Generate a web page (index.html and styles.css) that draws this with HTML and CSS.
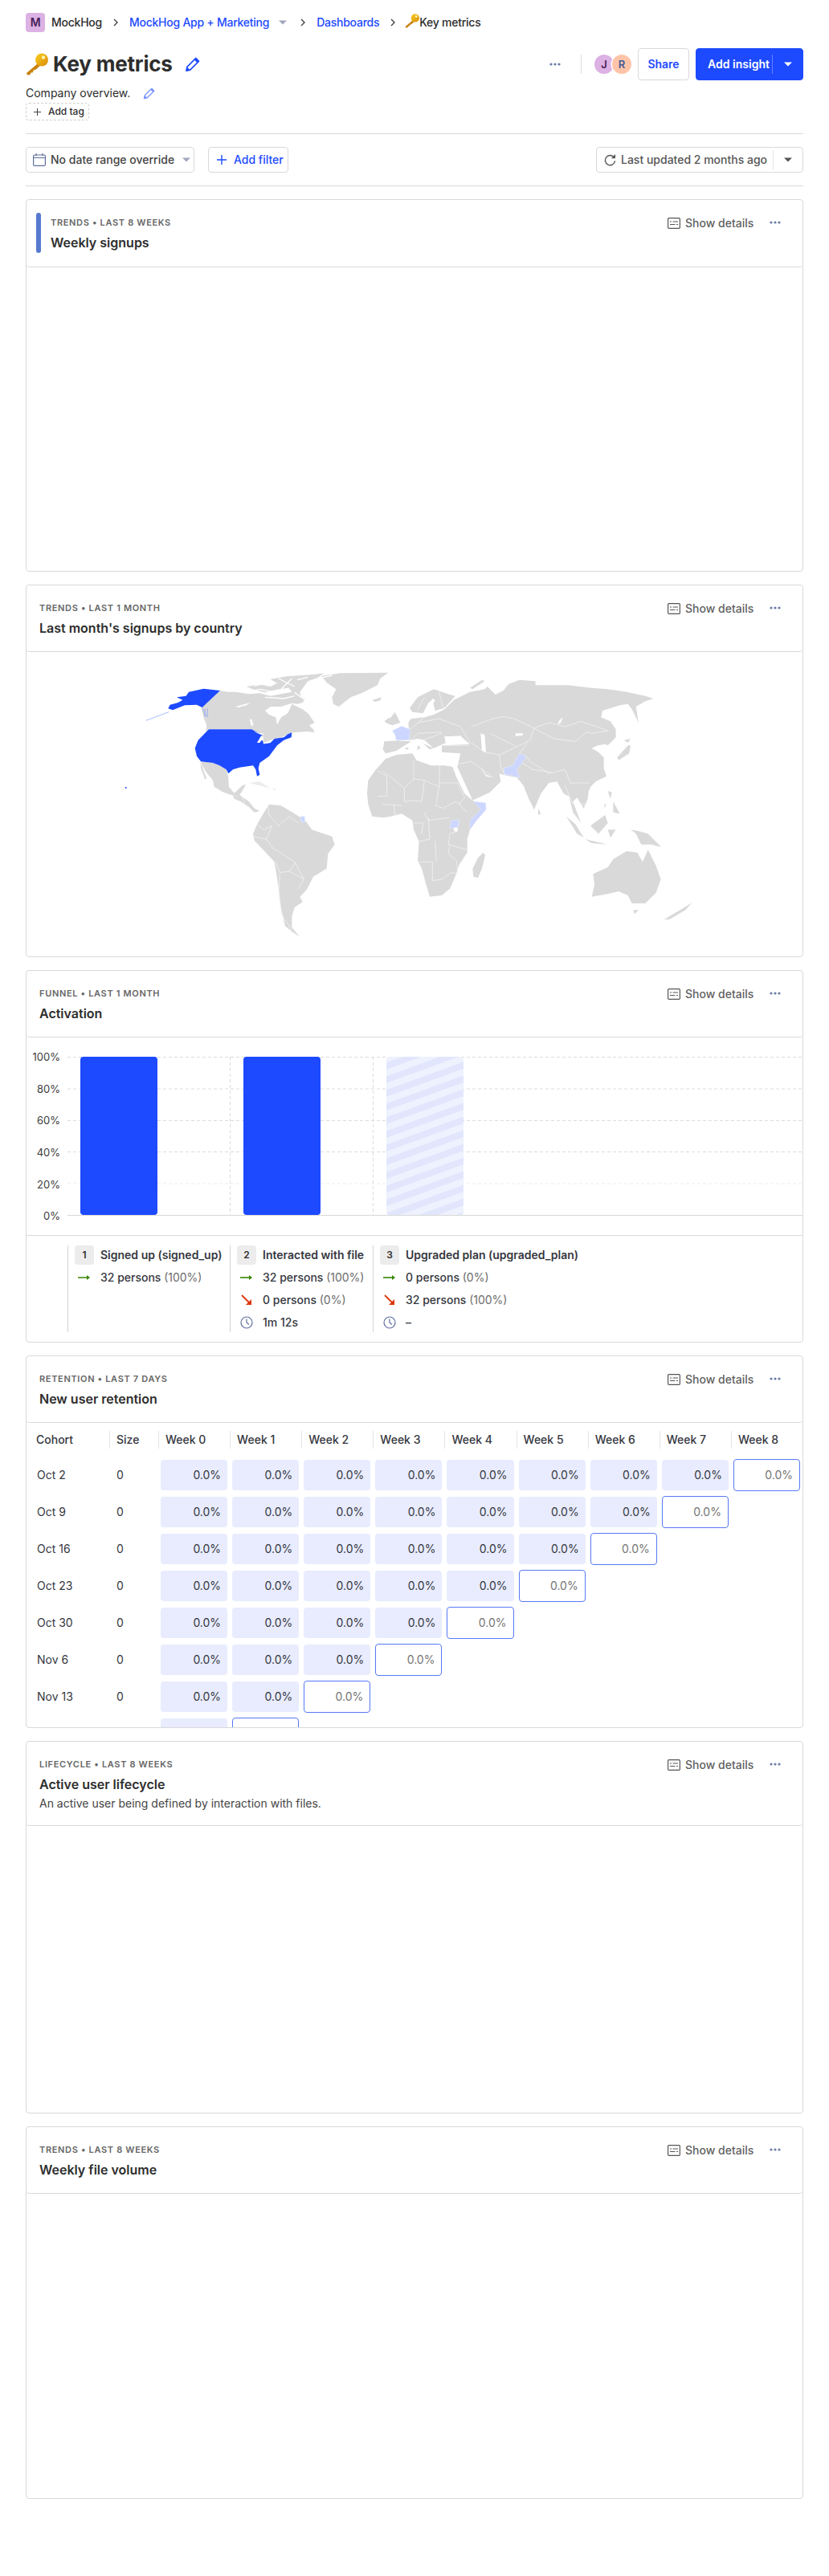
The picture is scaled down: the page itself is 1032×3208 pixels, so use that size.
FILE: index.html
```html
<!DOCTYPE html>
<html lang="en">
<head>
<meta charset="utf-8">
<title>Key metrics</title>
<link rel="stylesheet" href="styles.css">
</head>
<body>
<svg class="defs" width="0" height="0" aria-hidden="true">
  <defs>
    <linearGradient id="gold" x1="0" y1="0" x2="1" y2="1"><stop offset="0" stop-color="#fbd01e"/><stop offset="1" stop-color="#d98a0c"/></linearGradient>
    <pattern id="hatch" patternUnits="userSpaceOnUse" width="16" height="16" patternTransform="rotate(-20)"><rect width="16" height="16" fill="#eef1fe"/><rect width="16" height="8" fill="#e1e6fd"/></pattern>
    <symbol id="i-key" viewBox="0 0 28 28">
      <path d="M15 13 1 25l1 2.500 3.500-.5 1-2.500 2.500-.3.5-2.600 2.500-.5 7-6z" fill="#c9820f"/>
      <circle cx="20" cy="8.500" r="8" fill="url(#gold)"/>
      <circle cx="22" cy="5.500" r="2.200" fill="#fff4b0"/>
    </symbol>
    <symbol id="i-pencil" viewBox="0 0 20 20"><path d="M2 18l1-5L13 3l4 4L7 17zM14.500 1.500l4 4-1 1-4-4z" fill="none" stroke="currentColor" stroke-width="1.700" stroke-linejoin="round"/><path d="M3 13l4 4-5 1z" fill="currentColor"/></symbol>
    <symbol id="i-chev" viewBox="0 0 8 12"><path d="M2 2l4 4-4 4" fill="none" stroke="currentColor" stroke-width="1.400"/></symbol>
    <symbol id="i-caret" viewBox="0 0 10 6"><path d="M0 .5h10L5 5.500z" fill="currentColor"/></symbol>
    <symbol id="i-plus" viewBox="0 0 12 12"><path d="M6 0v12M0 6h12" stroke="currentColor" stroke-width="1.400"/></symbol>
    <symbol id="i-dots" viewBox="0 0 14 4"><circle cx="2" cy="2" r="1.600" fill="currentColor"/><circle cx="7" cy="2" r="1.600" fill="currentColor"/><circle cx="12" cy="2" r="1.600" fill="currentColor"/></symbol>
    <symbol id="i-details" viewBox="0 0 16 14"><rect x=".6" y=".6" width="14.800" height="12.800" rx="1.200" fill="none" stroke="currentColor" stroke-width="1.200"/><path d="M3 5h2M6.500 5h6.500M3 8.500h6.500M11 8.500h2" stroke="currentColor" stroke-width="1.200"/></symbol>
    <symbol id="i-right" viewBox="0 0 16 8"><path d="M0 4h13" stroke="#388600" stroke-width="1.600"/><path d="M11 1l4 3-4 3z" fill="#388600"/></symbol>
    <symbol id="i-down" viewBox="0 0 14 14"><path d="M1 1l10 10" stroke="#db3707" stroke-width="1.800"/><path d="M13 6v7H6z" fill="#db3707"/></symbol>
    <symbol id="i-clock" viewBox="0 0 16 16"><circle cx="8" cy="8" r="7" fill="none" stroke="#5f6fa0" stroke-width="1.200"/><path d="M8 3.500V8l3 2.500" fill="none" stroke="#5f6fa0" stroke-width="1.200"/></symbol>
  </defs>
</svg>

<main class="page">
  <nav class="crumbs">
    <span class="org-badge">M</span>
    <span class="crumb">MockHog</span>
    <svg class="chev"><use href="#i-chev"/></svg>
    <a class="crumb link">MockHog App + Marketing</a>
    <svg class="caret caret-gap"><use href="#i-caret"/></svg>
    <svg class="chev"><use href="#i-chev"/></svg>
    <a class="crumb link">Dashboards</a>
    <svg class="chev"><use href="#i-chev"/></svg>
    <svg class="crumb-key"><use href="#i-key"/></svg>
    <span class="crumb">Key metrics</span>
  </nav>

  <header class="page-head">
    <div class="title-wrap">
      <svg class="title-key"><use href="#i-key"/></svg>
      <h1 class="title">Key metrics</h1>
      <svg class="title-pencil"><use href="#i-pencil"/></svg>
    </div>
    <div class="head-actions">
      <svg class="dots head-dots"><use href="#i-dots"/></svg>
      <span class="vsep"></span>
      <span class="avatars"><span class="avatar av-j">J</span><span class="avatar av-r">R</span></span>
      <button class="btn btn-share">Share</button>
      <button class="btn btn-primary"><span class="btn-primary-label">Add insight</span><span class="btn-primary-side"><svg class="caret caret-white"><use href="#i-caret"/></svg></span></button>
    </div>
  </header>

  <div class="desc-row"><span>Company overview.</span><svg class="desc-pencil"><use href="#i-pencil"/></svg></div>
  <div class="tag"><svg class="tag-plus"><use href="#i-plus"/></svg>Add tag</div>

  <hr class="rule">

  <div class="filters">
    <button class="btn btn-filter btn-date">
      <svg class="cal" viewBox="0 0 16 16"><rect x=".6" y="2" width="14.800" height="13.400" rx="1.500" fill="none" stroke="#5f6fa0" stroke-width="1.200"/><path d="M.6 5.500h14.800M4 0v3M12 0v3" stroke="#5f6fa0" stroke-width="1.200"/></svg>
      <span>No date range override</span>
      <svg class="caret caret-date"><use href="#i-caret"/></svg>
    </button>
    <button class="btn btn-filter btn-add"><svg class="add-plus"><use href="#i-plus"/></svg>Add filter</button>
    <button class="btn btn-filter btn-updated">
      <svg class="refresh" viewBox="0 0 16 16"><path d="M13.500 4.500A6.500 6.500 0 1 0 14.500 9" fill="none" stroke="#555" stroke-width="1.500"/><path d="M9.500 5.500h5.500V0z" fill="#555"/></svg>
      <span>Last updated 2 months ago</span>
      <span class="updated-side"><svg class="caret caret-dark"><use href="#i-caret"/></svg></span>
    </button>
  </div>

  <hr class="rule">

  <section class="cards">
    <article class="card">
      <div class="card-head">
        <span class="ribbon"></span>
        <div class="card-titles"><div class="card-label">TRENDS • LAST 8 WEEKS</div><h2 class="card-title">Weekly signups</h2></div>
        <div class="card-actions"><svg class="details-ic"><use href="#i-details"/></svg><span class="details-text">Show details</span><svg class="dots"><use href="#i-dots"/></svg></div>
      </div>
      <div class="card-body"></div>
    </article>

    <article class="card">
      <div class="card-head">
        <div class="card-titles"><div class="card-label">TRENDS • LAST 1 MONTH</div><h2 class="card-title">Last month's signups by country</h2></div>
        <div class="card-actions"><svg class="details-ic"><use href="#i-details"/></svg><span class="details-text">Show details</span><svg class="dots"><use href="#i-dots"/></svg></div>
      </div>
      <div class="card-body">
        <svg class="map" viewBox="33 812 966 379">
          <g transform="translate(150 825) scale(.33333)">
            <g class="land">
              <path d="M372,105 400,110 430,110 480,118 520,115 560,125 600,118 640,110 690,135 680,150 660,155 640,152 600,165 560,165 540,180 555,195 580,205 585,232 600,205 625,190 640,155 680,175 700,190 725,225 705,235 720,250 725,262 700,258 660,260 640,262 600,280 560,300 530,298 535,285 515,265 500,255 490,250 330,250 318,262 322,235 310,205 302,168Z"/>
              <path d="M470,90 520,82 560,90 600,70 640,75 625,95 580,102 540,112 500,102ZM560,62 620,52 720,45 760,40 735,58 700,70 670,110 675,135 665,148 640,110 620,85 580,75ZM425,128 465,125 445,138Z"/>
              <path d="M750,50 820,40 1000,38 970,60 960,85 900,115 860,130 815,165 795,155 790,130 805,100 770,75ZM940,140 975,130 970,142 950,147Z"/>
              <path d="M300,370 345,375 370,385 395,400 403,430 405,465 425,488 455,460 468,455 455,480 445,495 420,497 385,485 350,465 345,440 320,410 305,385ZM298,372 322,435 315,435 300,395Z"/>
              <path d="M420,497 445,495 480,520 500,545 520,555 500,560 480,540 450,520 425,510Z"/>
              <path class="faint" d="M480,450 520,445 560,470 520,460ZM565,470 585,473 575,478Z"/>
              <path d="M555,530 600,535 650,565 690,590 715,625 790,650 800,680 775,715 770,770 720,800 695,850 670,875 680,895 650,915 640,950 640,990 670,1025 640,1005 615,985 600,920 590,840 575,745 500,665 495,640 510,605 530,570Z"/>
            </g>
            <path class="white-fill" d="M430,165 485,150 470,160 440,168ZM483,215 489,210 497,235 489,237Z"/>
            <path class="channels" d="M460,112 520,100 580,112 630,100M500,88 560,72M590,60 650,90M640,60 600,100M540,130 610,135 650,125M660,65 700,55M650,112 690,140M745,58 790,48M720,95 770,80"/>
            <g class="borders">
              <path d="M550,535 555,570 590,610 630,575 665,600M510,605 535,625 565,610M565,610 545,660M495,650 545,660 570,695 580,700 650,745 685,810 665,845M580,745 595,785 630,780 655,745M595,790 590,870 600,940 640,1000M630,780 685,810"/>
              <path d="M425,510 445,520M450,495 465,525"/>
            </g>
            <path class="us" d="M330,250 490,250 505,258 530,268 510,300 530,290 535,305 575,285 610,280 625,268 640,262 638,280 610,290 585,310 570,330 555,350 520,375 515,395 520,420 510,425 505,400 495,385 445,392 420,400 403,415 395,400 370,385 345,375 300,370 285,350 278,320 290,290 315,265Z"/>
            <path class="white-fill" d="M510,300 525,275 535,278 520,300ZM535,300 560,290 575,285 560,300 545,303ZM498,258 540,268 525,270Z"/>
            <path class="us" d="M372,105 310,98 255,110 245,125 210,130 232,140 215,150 185,158 178,172 195,178 240,160 285,158 305,168Z"/>
            <path class="us-thin" d="M95,217 180,185M305,172 323,204M315,172V202M325,172V202"/>
            <circle class="us" cx="20" cy="468" r="3"/>
            <path class="light" d="M672,575H688V597H675Z"/>
          </g>
          <g transform="translate(470 825) scale(.33333)">
            <g class="land">
              <path d="M-39,490 -35,440 -10,405 30,360 70,345 130,340 145,365 200,385 250,385 280,390 295,430 325,490 358,518 405,525 405,550 370,590 345,625 335,660 335,710 305,755 290,800 270,845 240,870 195,875 180,825 165,770 150,740 155,670 135,625 130,590 90,565 50,575 20,580 -20,575 -35,530Z"/>
              <path d="M395,710 402,720 390,770 375,805 358,800 355,770 375,730Z"/>
              <path d="M25,295 75,292 125,295 70,330 30,340 20,325Z"/>
              <path d="M115,225 125,210 175,205 210,195 250,175 285,140 345,110 400,100 410,90 440,120 470,105 490,80 530,65 590,70 590,85 650,85 710,85 800,95 860,100 930,110 1000,125 1030,135 1000,145 965,165 975,225 950,175 935,155 905,160 840,180 835,205 870,220 890,250 890,280 860,310 850,305 825,310 800,320 825,335 845,355 845,395 855,425 815,445 790,470 785,510 770,545 745,505 730,520 745,560 760,600 730,560 715,500 695,490 670,445 640,450 610,490 585,550 565,510 545,460 520,430 470,420 455,415 460,445 420,485 355,515 298,390 310,340 240,335 240,310 345,305 320,285 250,275 255,300 210,320 175,290 150,285 120,290Z"/>
              <path d="M130,275 175,305 210,320 195,325 160,295ZM150,310 162,318 148,328ZM100,320 115,317 115,327Z"/>
              <path d="M120,170 150,130 210,100 270,120 290,125 250,170 215,180 205,140 190,150 170,190 130,185Z"/>
              <path d="M30,225 50,205 65,185 85,225 55,235ZM25,220 45,205 40,228ZM345,95 390,65 400,70 355,100Z"/>
              <path d="M900,365 940,340 945,310 935,310 895,355ZM920,290 945,285 935,300ZM600,545 610,565 600,570ZM705,575 740,605 770,655 745,640ZM775,660 860,680 800,675ZM795,610 850,570 860,600 825,640ZM860,625 890,625 870,655ZM860,480 875,485 870,510ZM880,520 905,565 880,560ZM945,625 975,630 1010,640 1060,690 1025,680 985,680 965,640ZM785,470 795,467 792,477ZM845,545 850,525 853,535Z"/>
              <path d="M805,790 860,765 880,735 930,705 970,710 990,745 1010,700 1040,760 1058,810 1040,860 1000,900 950,900 935,870 900,855 860,865 800,875 810,830ZM955,925 975,925 960,940ZM1070,960 1130,925 1175,897 1150,925 1090,960Z"/>
            </g>
            <path class="white-fill" d="M175,190 205,135 215,140 200,170ZM250,277 310,274 325,289 290,294 255,304ZM385,265 400,270 405,335 390,330ZM380,385 405,420 435,430 405,425ZM515,265H545L540,273 515,275ZM680,215 692,205 685,225 672,232ZM285,615 300,618 297,633 285,630ZM800,320 825,310 815,325Z"/>
            <path class="light" d="M55,255 90,238 122,250 118,290H70L65,270ZM470,395 505,385 530,340 555,350 540,375 520,400 530,430 510,425 495,420 475,420ZM360,520 405,525V550L370,590 345,625V590L385,550ZM270,620 275,590 305,588 300,615Z"/>
            <g class="borders">
              <path d="M0,405 35,425V500H0M20,405 100,470 135,435 175,440 230,465 232,385M135,365V435M232,450H300M100,470V520L140,515 165,520 175,440M230,465 218,535 245,545 290,520 310,530M300,450 325,505 305,530 335,560M175,560 190,590 270,580M190,580 195,660 150,670M135,600H170L165,640M155,745H205V815M300,630 270,640 265,680 300,690 335,700M215,670 220,745M270,680 265,715 295,740 300,790 275,785 240,810 205,815M60,530 65,570M20,530 90,535"/>
              <path d="M350,240 430,210 470,202 510,210 585,245M585,245 640,225 700,240 760,220 860,255 800,265 780,260 740,295 660,285 610,260ZM560,300 530,340M555,350 570,370 640,415 700,400 720,450 790,450M350,300 400,335 455,345 460,390 475,420M455,345 530,310 570,290 585,245M300,380 350,370 420,420M540,375 580,400 650,410M700,460 730,530 780,530M122,250 175,205M150,225 230,210 310,240 345,300M125,290 150,265 240,260M170,290 240,265M150,175 175,130M230,110 245,170M420,265 480,295 520,315M240,310H340"/>
            </g>
          </g>
        </svg>
      </div>
    </article>

    <article class="card">
      <div class="card-head">
        <div class="card-titles"><div class="card-label">FUNNEL • LAST 1 MONTH</div><h2 class="card-title">Activation</h2></div>
        <div class="card-actions"><svg class="details-ic"><use href="#i-details"/></svg><span class="details-text">Show details</span><svg class="dots"><use href="#i-dots"/></svg></div>
      </div>
      <div class="card-body funnel">
        <svg class="funnel-chart" viewBox="33 1292 966 246">
          <g class="grid">
            <path d="M84 1316.500H999M84 1356H999M84 1395.500H999M84 1434.500H999"/>
            <path class="grid-faint" d="M84 1474H999"/>
            <path d="M286.500 1316V1513M464.500 1316V1513"/>
          </g>
          <rect class="bar" x="100" y="1316" width="96" height="197" rx="4"/>
          <rect class="bar" x="303" y="1316" width="96" height="197" rx="4"/>
          <rect x="481" y="1316" width="96" height="197" rx="4" fill="url(#hatch)"/>
          <path class="baseline" d="M84 1513.500H999"/>
          <g class="axis">
            <text x="75" y="1320.500">100%</text>
            <text x="75" y="1360.500">80%</text>
            <text x="75" y="1399.500">60%</text>
            <text x="75" y="1439.500">40%</text>
            <text x="75" y="1479.500">20%</text>
            <text x="75" y="1518.500">0%</text>
          </g>
        </svg>
        <div class="legend">
          <div class="step step-1">
            <div class="step-head"><span class="badge">1</span><span class="step-name">Signed up (signed_up)</span></div>
            <div class="step-row"><svg class="ic-right"><use href="#i-right"/></svg><span>32 persons <em>(100%)</em></span></div>
          </div>
          <div class="step step-2">
            <div class="step-head"><span class="badge">2</span><span class="step-name">Interacted with file</span></div>
            <div class="step-row"><svg class="ic-right"><use href="#i-right"/></svg><span>32 persons <em>(100%)</em></span></div>
            <div class="step-row"><svg class="ic-down"><use href="#i-down"/></svg><span>0 persons <em>(0%)</em></span></div>
            <div class="step-row"><svg class="ic-clock"><use href="#i-clock"/></svg><span>1m 12s</span></div>
          </div>
          <div class="step step-3">
            <div class="step-head"><span class="badge">3</span><span class="step-name">Upgraded plan (upgraded_plan)</span></div>
            <div class="step-row"><svg class="ic-right"><use href="#i-right"/></svg><span>0 persons <em>(0%)</em></span></div>
            <div class="step-row"><svg class="ic-down"><use href="#i-down"/></svg><span>32 persons <em>(100%)</em></span></div>
            <div class="step-row"><svg class="ic-clock"><use href="#i-clock"/></svg><span>–</span></div>
          </div>
        </div>
      </div>
    </article>

    <article class="card">
      <div class="card-head">
        <div class="card-titles"><div class="card-label">RETENTION • LAST 7 DAYS</div><h2 class="card-title">New user retention</h2></div>
        <div class="card-actions"><svg class="details-ic"><use href="#i-details"/></svg><span class="details-text">Show details</span><svg class="dots"><use href="#i-dots"/></svg></div>
      </div>
      <div class="card-body retention">
        <div class="ret-head"><span>Cohort</span><span>Size</span><span>Week 0</span><span>Week 1</span><span>Week 2</span><span>Week 3</span><span>Week 4</span><span>Week 5</span><span>Week 6</span><span>Week 7</span><span>Week 8</span></div>
        <div class="ret-row"><span class="cohort">Oct 2</span><span class="size">0</span><span class="cell">0.0%</span><span class="cell">0.0%</span><span class="cell">0.0%</span><span class="cell">0.0%</span><span class="cell">0.0%</span><span class="cell">0.0%</span><span class="cell">0.0%</span><span class="cell">0.0%</span><span class="cell open">0.0%</span></div>
        <div class="ret-row"><span class="cohort">Oct 9</span><span class="size">0</span><span class="cell">0.0%</span><span class="cell">0.0%</span><span class="cell">0.0%</span><span class="cell">0.0%</span><span class="cell">0.0%</span><span class="cell">0.0%</span><span class="cell">0.0%</span><span class="cell open">0.0%</span></div>
        <div class="ret-row"><span class="cohort">Oct 16</span><span class="size">0</span><span class="cell">0.0%</span><span class="cell">0.0%</span><span class="cell">0.0%</span><span class="cell">0.0%</span><span class="cell">0.0%</span><span class="cell">0.0%</span><span class="cell open">0.0%</span></div>
        <div class="ret-row"><span class="cohort">Oct 23</span><span class="size">0</span><span class="cell">0.0%</span><span class="cell">0.0%</span><span class="cell">0.0%</span><span class="cell">0.0%</span><span class="cell">0.0%</span><span class="cell open">0.0%</span></div>
        <div class="ret-row"><span class="cohort">Oct 30</span><span class="size">0</span><span class="cell">0.0%</span><span class="cell">0.0%</span><span class="cell">0.0%</span><span class="cell">0.0%</span><span class="cell open">0.0%</span></div>
        <div class="ret-row"><span class="cohort">Nov 6</span><span class="size">0</span><span class="cell">0.0%</span><span class="cell">0.0%</span><span class="cell">0.0%</span><span class="cell open">0.0%</span></div>
        <div class="ret-row"><span class="cohort">Nov 13</span><span class="size">0</span><span class="cell">0.0%</span><span class="cell">0.0%</span><span class="cell open">0.0%</span></div>
        <div class="ret-row"><span class="cell cell-first"></span><span class="cell open"></span></div>
      </div>
    </article>

    <article class="card">
      <div class="card-head">
        <div class="card-titles"><div class="card-label">LIFECYCLE • LAST 8 WEEKS</div><h2 class="card-title">Active user lifecycle</h2><p class="card-desc">An active user being defined by interaction with files.</p></div>
        <div class="card-actions"><svg class="details-ic"><use href="#i-details"/></svg><span class="details-text">Show details</span><svg class="dots"><use href="#i-dots"/></svg></div>
      </div>
      <div class="card-body"></div>
    </article>

    <article class="card">
      <div class="card-head">
        <div class="card-titles"><div class="card-label">TRENDS • LAST 8 WEEKS</div><h2 class="card-title">Weekly file volume</h2></div>
        <div class="card-actions"><svg class="details-ic"><use href="#i-details"/></svg><span class="details-text">Show details</span><svg class="dots"><use href="#i-dots"/></svg></div>
      </div>
      <div class="card-body"></div>
    </article>
  </section>
</main>
</body>
</html>
```

FILE: styles.css
```css
* { box-sizing: border-box; }
html, body { margin: 0; padding: 0; background: #fff; }
body { font-family: Inter, "Liberation Sans", sans-serif; font-size: 14px; color: #2d2d2d; line-height: 20px; }
.defs { position: absolute; }
svg { display: block; flex: none; }
.page { padding: 16px 32px 96px; }

.crumbs { display: flex; align-items: center; height: 24px; font-weight: 500; letter-spacing: -.25px; }
.org-badge { width: 24px; height: 24px; border-radius: 4px; background: #dcb1e3; color: #4a2058; display: flex; align-items: center; justify-content: center; font-weight: 600; margin-right: 8px; }
.crumb { white-space: nowrap; }
.link { color: #1d4aff; }
.chev { width: 8px; height: 12px; color: #444; margin: 0 13px; }
.caret { width: 10px; height: 6px; color: #a0a7bd; }
.caret-gap { margin-left: 12px; margin-right: 3px; }
.crumb-key { width: 18px; height: 18px; margin-left: -2px; margin-bottom: 4px; }

.page-head { display: flex; align-items: center; justify-content: space-between; height: 40px; margin-top: 20px; }
.title-wrap { display: flex; align-items: center; }
.title-key { width: 28px; height: 28px; margin-right: 6px; }
.title { margin: 0; font-size: 26px; font-weight: 700; line-height: 40px; letter-spacing: -.2px; }
.title-pencil { width: 19px; height: 19px; color: #1d4aff; margin-left: 15px; }
.head-actions { display: flex; align-items: center; }
.dots { width: 14px; height: 4px; color: #6b7ba8; }
.head-dots { margin-right: 25px; }
.vsep { width: 1px; height: 24px; background: #dcdcdc; margin-right: 16px; }
.avatars { display: flex; margin-right: 8px; }
.avatar { width: 24px; height: 24px; border-radius: 50%; display: flex; align-items: center; justify-content: center; font-weight: 600; font-size: 13px; }
.av-j { background: #dcb1e3; color: #4a2058; }
.av-r { background: #ffc4a8; color: #3f5a99; margin-left: -2px; box-shadow: 0 0 0 1.5px #fff; }
.btn { font: inherit; background: #fff; border: 1px solid #d9d9d9; border-radius: 4px; display: flex; align-items: center; padding: 0; color: inherit; }
.btn-share { width: 64px; height: 40px; justify-content: center; color: #1d4aff; font-weight: 600; margin-right: 8px; }
.btn-primary { width: 134px; height: 40px; background: #1d4aff; border-color: #1d4aff; color: #fff; font-weight: 600; padding-left: 11px; }
.btn-primary-label { width: 83px; white-space: nowrap; }
.btn-primary-side { flex: 1; height: 24px; border-left: 1px solid rgba(255,255,255,.3); display: flex; align-items: center; justify-content: center; }
.caret-white { color: #fff; }

.desc-row { display: flex; align-items: center; height: 20px; margin-top: 6px; }
.desc-pencil { width: 15px; height: 15px; color: #7a93ff; margin-left: 16px; }
.tag { display: flex; align-items: center; height: 22px; width: 79px; margin-top: 2px; border: 1px dashed #d0d0d0; border-radius: 4px; font-size: 12px; font-weight: 500; padding-left: 9px; }
.tag-plus { width: 9px; height: 9px; margin-right: 9px; color: #444; }
.rule { border: 0; border-top: 1px solid #d9d9d9; margin: 16px 0; }

.filters { display: flex; align-items: center; height: 32px; }
.btn-filter { height: 32px; font-weight: 500; white-space: nowrap; }
.btn-date { width: 210px; padding-left: 8px; margin-right: 17px; color: #444; }
.cal { width: 16px; height: 16px; margin-right: 6px; }
.caret-date { margin-left: 10px; }
.btn-add { width: 100px; padding-left: 10px; color: #1d4aff; }
.add-plus { width: 12px; height: 12px; margin-right: 9px; }
.btn-updated { width: 258px; margin-left: auto; padding-left: 9px; color: #555; }
.refresh { width: 15px; height: 15px; margin-right: 6px; }
.updated-side { margin-left: auto; width: 37px; height: 24px; border-left: 1px solid #e5e5e5; display: flex; align-items: center; justify-content: center; }
.caret-dark { color: #555; }

.cards { display: flex; flex-direction: column; gap: 16px; }
.card { height: 464px; border: 1px solid #d9d9d9; border-radius: 4px; display: flex; flex-direction: column; overflow: hidden; background: #fff; }
.card-head { display: flex; align-items: flex-start; padding: 20px 16px 17px; border-bottom: 1px solid #d9d9d9; border-radius: 0 0 4px 4px; flex: none; }
.ribbon { width: 6px; height: 50px; border-radius: 3px; background: #5679d0; margin: -4px 12px 0 -4px; flex: none; }
.card-titles { flex: 1; min-width: 0; }
.card-label { height: 16px; line-height: 16px; font-size: 11px; font-weight: 600; letter-spacing: .66px; color: #666; white-space: nowrap; }
.card-title { margin: 5px 0 0; font-size: 16px; line-height: 24px; font-weight: 600; color: #2d2d2d; }
.card-desc { margin: 2px 0 0; font-size: 14px; line-height: 20px; color: #444; }
.card-actions { display: flex; align-items: center; height: 18px; color: #5f5f5f; margin-right: 11px; }
.details-ic { width: 16px; height: 14px; margin-right: 6px; color: #555; }
.details-text { font-weight: 500; line-height: 18px; width: 84px; white-space: nowrap; }
.card-actions .dots { margin-left: 21px; margin-top: -2px; }
.card-body { flex: 1; min-height: 0; }

.map { width: 966px; height: 379px; }
.land { fill: #d9d9d9; }
.land .faint { fill: #ececec; }
.white-fill { fill: #fff; }
.channels { fill: none; stroke: #fff; stroke-width: 4; }
.borders { fill: none; stroke: #f4f4f4; stroke-width: 2.200; stroke-linejoin: round; }
.us { fill: #1d4aff; }
.us-thin { fill: none; stroke: #7f9aff; stroke-width: 2; }
.light { fill: #ccd6ff; stroke: #ebeeff; stroke-width: 1.500; }

.funnel { display: flex; flex-direction: column; }
.funnel-chart { width: 966px; height: 246px; }
.grid path { fill: none; stroke: #dcdcdc; stroke-dasharray: 4 3; }
.grid .grid-faint { stroke: #ececec; }
.baseline { stroke: #d9d9d9; fill: none; }
.bar { fill: #1d4aff; }
.axis text { font-family: Inter, "Liberation Sans", sans-serif; font-size: 13px; fill: #3d3d3d; text-anchor: end; }
.legend { flex: 1; border-top: 1px solid #d9d9d9; padding: 12px 0 0 51px; display: flex; align-items: flex-start; }
.step { height: 108px; border-left: 1px solid #d4d4d4; padding-left: 8px; white-space: nowrap; }
.step-1 { width: 202px; }
.step-2 { width: 178px; }
.step-3 { flex: 1; }
.step-head { display: flex; align-items: center; height: 24px; margin-bottom: 2px; gap: 8px; }
.badge { width: 24px; height: 24px; border-radius: 4px; background: #ececec; display: flex; align-items: center; justify-content: center; font-size: 12px; font-weight: 600; }
.step-name { font-weight: 600; color: #35373e; }
.step-row { display: flex; align-items: center; height: 28px; gap: 8px; font-weight: 500; color: #35373e; }
.step-row em { font-style: normal; color: #6b6b6b; font-weight: 400; }
.ic-right { width: 16px; height: 8px; margin: 0 4px; }
.ic-down { width: 14px; height: 14px; margin: 0 5px; }
.ic-clock { width: 16px; height: 16px; margin: 0 4px; }

.retention { padding-top: 10px; overflow: hidden; }
.ret-head, .ret-row { display: grid; grid-template-columns: 103px 61px repeat(9, 1fr); }
.ret-head { height: 22px; margin-bottom: 10px; font-weight: 500; color: #35373e; line-height: 22px; }
.ret-head span { border-left: 1px solid #e3e3e3; padding-left: 8px; white-space: nowrap; }
.ret-head span:first-child { border-left: 0; padding-left: 12px; }
.ret-row { height: 46px; align-items: center; font-weight: 400; color: #35373e; }
.cohort { padding-left: 13px; }
.size { padding-left: 9px; }
.cell { height: 38px; margin: 0 3px; border-radius: 4px; background: #e8ecfe; line-height: 38px; text-align: right; padding-right: 8px; }
.cell-first { grid-column: 3; }
.cell.open { height: 40px; line-height: 38px; border: 1px solid #5679f5; background: #fff; color: #747474; }
```
